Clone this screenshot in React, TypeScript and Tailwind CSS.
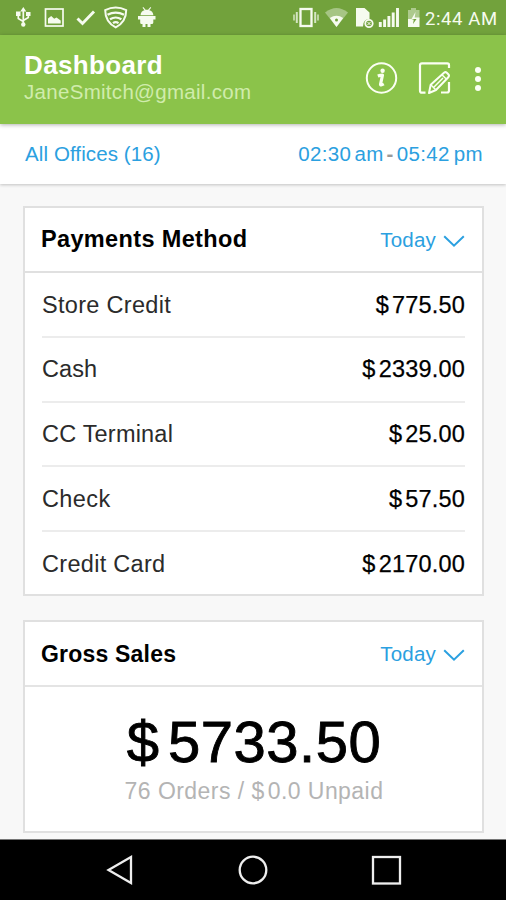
import React from "react";

type Row = { label: string; amount: string; labelClass: string };

const rows: Row[] = [
  { label: "Store Credit", amount: "775.50", labelClass: "tracking-[0.3px]" },
  { label: "Cash", amount: "2339.00", labelClass: "tracking-[0.1px]" },
  { label: "CC Terminal", amount: "25.00", labelClass: "tracking-[0.2px]" },
  { label: "Check", amount: "57.50", labelClass: "tracking-[0.4px]" },
  { label: "Credit Card", amount: "2170.00", labelClass: "tracking-[0.3px]" },
];

function LeftStatusIcons() {
  return (
    <svg width="170" height="34" viewBox="0 0 170 34" fill="none" className="text-[#f6fbef]">
      {/* USB */}
      <g stroke="currentColor" strokeWidth="1.7">
        <path d="M23.3 10v14M18.3 14v4.5l5 3M28.3 13v4.5l-5 3" />
      </g>
      <path d="M20.3 11.5l3-4.5 3 4.5zM16 11.5h4.5v4.5H16zM26 12h4.5v4H26z" fill="currentColor" />
      <circle cx="23.3" cy="24.5" r="2.2" fill="currentColor" />
      {/* Picture */}
      <rect x="45.5" y="9" width="17.5" height="17" stroke="currentColor" strokeWidth="1.7" />
      <path d="M48 23.5v-5l3.2-2.5 3 2.7 2.3-1.3 4.2 3v3.1z" fill="currentColor" />
      {/* Check */}
      <path d="M77.5 18.5l5 5 11.5-12" stroke="currentColor" strokeWidth="2.9" />
      {/* Shield with waves */}
      <path d="M105.2 10.2q10.5-5.2 21 0c0 8.5-4.5 14-10.500 17.200c-6-3.200-10.500-8.700-10.500-17.200z" stroke="currentColor" strokeWidth="2" />
      <path d="M107.500 14.800q8.200-4.500 16.500 0M110 19.300q5.700-3.600 11.400 0M113 23.200q2.700-2 5.500 0" stroke="currentColor" strokeWidth="2.200" />
      {/* Android */}
      <path d="M140.500 15.200c.2-3 2-4.700 4-5l-2-2.500.8-.7 2.300 2.800h2.500l2.300-2.800.8.7-2 2.500c2.200.3 4 2 4.200 5z" fill="currentColor" />
      <path d="M138 16h17.500v3.500h-2.200v3q0 1.500-1.500 1.500h-1.300v3h-3v-3h-2v3h-3v-3h-1q-1.300 0-1.300-1.500v-3H138z" fill="currentColor" />
    </svg>
  );
}

function RightStatusIcons() {
  return (
    <svg width="134" height="34" viewBox="290 0 134 34" fill="none" className="text-[#f6fbef]">
      {/* Vibrate */}
      <rect x="300.500" y="9" width="11" height="17" stroke="currentColor" strokeWidth="2.300" />
      <path d="M296.800 12v11M315.200 12v11" stroke="currentColor" strokeWidth="2" opacity=".75" />
      <path d="M294 14.500v6M318 14.500v6" stroke="currentColor" strokeWidth="1.500" opacity=".75" />
      {/* Wi-Fi */}
      <path d="M325 12.500q11.500-9 23 0L336.500 27z" fill="currentColor" opacity=".4" />
      <path d="M329.800 18q6.700-4.500 13.400 0L336.500 27z" fill="currentColor" />
      <circle cx="336.500" cy="20" r="1.500" fill="#72a23c" />
      {/* SIM missing */}
      <path d="M356 8h8.500l5 4.500V19q-6.500 0-6.500 7.500h-7z" fill="currentColor" />
      <circle cx="369" cy="23.500" r="3.700" stroke="currentColor" strokeWidth="1.800" />
      <path d="M367.500 22l3 3m0-3l-3 3" stroke="currentColor" />
      {/* Signal */}
      <path d="M380.300 22v5M384.600 19.500V27M388.900 16v11M393.200 12.500V27M397.500 8v19" stroke="currentColor" strokeWidth="2.900" />
      {/* Battery */}
      <path d="M408 10h3V8h5v2h3.500v9H408z" fill="currentColor" opacity=".45" />
      <path d="M408 19h3.500l4-7-.8 5.500h4.800V27H408z" fill="currentColor" />
      <path d="M411.500 20h2.200l-.7 4 3.500-5h-2.200" fill="#72a23c" />
    </svg>
  );
}

function InfoIcon() {
  return (
    <svg width="34" height="34" viewBox="0 0 34 34" fill="none" className="text-[#fbfff3]">
      <circle cx="16.500" cy="17" r="14.700" stroke="currentColor" strokeWidth="2" />
      <circle cx="17.600" cy="9.800" r="2.200" fill="currentColor" />
      <path d="M12.800 15q2.500-.9 4.700-.9l-2 9.200q-.2 1.600 3.300-.3" stroke="currentColor" strokeWidth="3.100" strokeLinejoin="round" />
    </svg>
  );
}

function EditIcon() {
  return (
    <svg width="34" height="34" viewBox="0 0 34 34" fill="none" stroke="currentColor" strokeWidth="2" className="text-[#fbfff3]">
      <path d="M31 7V4q0-1.700-1.700-1.700H4q-2 0-2 2v25.400q0 2 2 2h3.500M31 21v8.500q0 2-2 2h-6" strokeWidth="2.200" />
      <path d="M11 32l1.700-8.200L26 11.700q1.500-1.200 2.800 0l1.500 1.500q1.400 1.500 0 3L18 29z" strokeLinejoin="round" />
      <path d="M24 13.700l4 4M13 24l4.500 4.500M15.500 26.500l9.500-9.500" strokeWidth="1.500" />
    </svg>
  );
}

function TodayPicker() {
  return (
    <button className="flex items-center pt-px text-[#2ba0e0]">
      <span className="text-[20.5px] leading-none tracking-[0.2px]">Today</span>
      <svg width="22" height="14" viewBox="0 0 22 14" fill="none" className="ml-[7px]">
        <path d="M1.200 2.200L11 11.700l9.800-9.500" stroke="currentColor" strokeWidth="2" />
      </svg>
    </button>
  );
}

export default function App() {
  return (
    <div className="flex h-[900px] w-[506px] flex-col overflow-hidden bg-[#f8f8f8] font-['Liberation_Sans',Arial,sans-serif] text-black">
      <div className="flex h-[35px] shrink-0 items-start bg-[#72a23c]">
        <LeftStatusIcons />
        <div className="w-[120px]" />
        <RightStatusIcons />
        <span className="ml-px whitespace-nowrap pt-[9px] font-[Roboto,sans-serif] text-[18.5px] leading-[20px] tracking-[0.6px] text-[#f6fbef]">2:44 AM</span>
      </div>

      <header className="z-10 flex h-[89px] shrink-0 items-start justify-between bg-[#8bc34a] pl-6 shadow-[0_1px_4px_rgba(0,0,0,0.3)]">
        <div className="pt-[15px]">
          <h1 className="text-[26px] font-bold leading-[30px] tracking-[0.35px] text-white">Dashboard</h1>
          <p className="text-[20.5px] leading-[24px] tracking-[0.3px] text-[#d0ecac]">JaneSmitch@gmail.com</p>
        </div>
        <div className="flex items-center pt-[26px]">
          <InfoIcon />
          <div className="w-[19px]" />
          <EditIcon />
          <div className="ml-[23px] mr-[25px] mt-[2px] flex flex-col gap-[3px]">
            <i className="size-[6px] rounded-full bg-[#fbfff3]" />
            <i className="size-[6px] rounded-full bg-[#fbfff3]" />
            <i className="size-[6px] rounded-full bg-[#fbfff3]" />
          </div>
        </div>
      </header>

      <div className="flex h-[60px] shrink-0 items-center justify-between bg-white pl-[25px] pr-[23px] text-[20.5px] leading-none text-[#2ba0e0] shadow-[0_1px_3px_rgba(0,0,0,0.22)]">
        <span className="tracking-[0.1px]">All Offices (16)</span>
        <span className="flex items-center tracking-[0.35px]">
          <span>02:30</span>
          <span className="ml-[3px]">am</span>
          <span className="mx-[3px] font-bold text-[#999]">-</span>
          <span>05:42</span>
          <span className="ml-[4px]">pm</span>
        </span>
      </div>

      <main className="flex grow flex-col pl-[23px] pr-[22px] pt-[22px]">
        <section className="h-[390px] border-2 border-[#e0e0e0] bg-white">
          <div className="flex h-[65px] items-center justify-between border-b-2 border-[#e0e0e0] pl-4 pr-[17px] pt-px">
            <h2 className="text-[23.5px] font-bold leading-none tracking-[0.35px]">Payments Method</h2>
            <TodayPicker />
          </div>
          <div className="px-[17px]">
            {rows.map((row) => (
              <div key={row.label} className="flex h-[64.8px] items-center justify-between border-b-2 border-[#ececec] pt-[2px] text-[23.5px] leading-none last:border-b-transparent">
                <span className={"text-[#2b2b2b] " + row.labelClass}>{row.label}</span>
                <span className="flex tracking-[0.2px] [-webkit-text-stroke:0.25px_black]">
                  <span className="mr-[3px]">$</span>
                  <span>{row.amount}</span>
                </span>
              </div>
            ))}
          </div>
        </section>

        <section className="mt-6 h-[213px] border-2 border-[#e0e0e0] bg-white">
          <div className="flex h-[65px] items-center justify-between border-b-2 border-[#e4e4e4] pl-4 pr-[17px] pt-px">
            <h2 className="text-[23px] font-bold leading-none tracking-[0.2px]">Gross Sales</h2>
            <TodayPicker />
          </div>
          <div className="flex flex-col items-center pl-px pt-[25px]">
            <div className="flex text-[58px] leading-[60px] [-webkit-text-stroke:0.9px_black]">
              <span className="mr-[9px]">$</span>
              <span className="tracking-[0.5px]">5733.50</span>
            </div>
            <div className="mt-[6px] flex text-[23px] leading-[26px] tracking-[0.45px] text-[#b4b4b4]">
              <span>76 Orders / $</span>
              <span className="ml-[3px]">0.0 Unpaid</span>
            </div>
          </div>
        </section>
      </main>

      <nav className="h-[61px] shrink-0 border-t border-[#777] bg-black">
        <svg width="506" height="60" viewBox="0 840 506 60" fill="none" stroke="#eee" strokeWidth="2.300">
          <path d="M131 857v26L108.500 870z" />
          <circle cx="253" cy="870" r="13.300" />
          <rect x="373" y="857" width="27" height="26.500" />
        </svg>
      </nav>
    </div>
  );
}
